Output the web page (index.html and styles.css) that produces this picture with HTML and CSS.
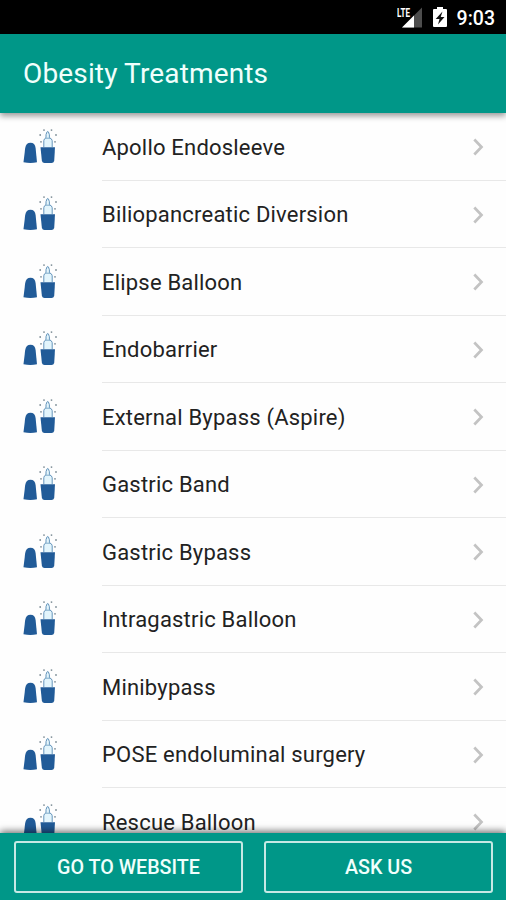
FILE: index.html
```html
<!DOCTYPE html>
<html lang="en">
<head>
<meta charset="utf-8">
<title>Obesity Treatments</title>
<link rel="stylesheet" href="styles.css">
</head>
<body>
<svg class="defs" aria-hidden="true">
  <symbol id="treatment" viewBox="0 0 36 36">
    <path d="M.5 33.3 2.2 19Q3 13.8 7.5 13.8T12.6 19L14 33.3Q7.5 34.6.5 33.3Z" fill="#215b98"/>
    <path d="M20.8 18V11.7Q21 9.7 23 8.7V5.7L24 2.9Q24.7 2.1 25.4 2.9L26.4 5.7V8.7Q29 9.7 29.2 11.7V18" fill="#e3f5fc" stroke="#6595bc" stroke-width="1"/>
    <path d="M22.5 9.2H27.2" stroke="#6595bc" stroke-width=".8"/>
    <path d="M17.5 18.2H32L31.2 32Q30.7 34 28.5 34H21.5Q19.4 34 18.9 32Z" fill="#215b98"/>
    <g fill="#7f8f98"><circle cx="21" cy="1.1" r=".9"/><circle cx="28.5" cy="1.1" r=".9"/><circle cx="17.2" cy="6" r=".9"/><circle cx="33" cy="6" r=".9"/><circle cx="18" cy="12.8" r=".9"/><circle cx="32" cy="12.8" r=".9"/></g>
  </symbol>
  <symbol id="chevron" viewBox="0 0 14 20"><path d="M2.3 2.5 9.5 10 2.3 17.5" fill="none" stroke="#c3c3c3" stroke-width="2.7"/></symbol>
</svg>
<div class="status">
  <svg class="signal" viewBox="0 0 28 24">
    <path d="M5 22.5 25 2.5V22.5Z" fill="#4d4d4d"/><path d="M5 22.5 17 10.5V22.5Z" fill="#fff"/>
    <text class="lte" x="0" y="11.5" textLength="13" lengthAdjust="spacingAndGlyphs">LTE</text>
  </svg>
  <svg class="battery" viewBox="0 0 14 20"><path d="M4 0H10V2H13Q14 2 14 3V19Q14 20 13 20H1Q0 20 0 19V3Q0 2 1 2H4Z" fill="#fff"/><path d="M9.5 4.5 2.7 12H6.5L5 17.5 11.5 10H7.7Z" fill="#111"/></svg>
  <span class="time">9:03</span>
</div>
<header class="header"><h1 class="title">Obesity Treatments</h1></header>
<main class="list">
  <div class="row"><svg class="icon"><use href="#treatment"/></svg><div class="item"><span>Apollo Endosleeve</span><svg class="chev"><use href="#chevron"/></svg></div></div>
  <div class="row"><svg class="icon"><use href="#treatment"/></svg><div class="item"><span>Biliopancreatic Diversion</span><svg class="chev"><use href="#chevron"/></svg></div></div>
  <div class="row"><svg class="icon"><use href="#treatment"/></svg><div class="item"><span>Elipse Balloon</span><svg class="chev"><use href="#chevron"/></svg></div></div>
  <div class="row"><svg class="icon"><use href="#treatment"/></svg><div class="item"><span>Endobarrier</span><svg class="chev"><use href="#chevron"/></svg></div></div>
  <div class="row"><svg class="icon"><use href="#treatment"/></svg><div class="item"><span>External Bypass (Aspire)</span><svg class="chev"><use href="#chevron"/></svg></div></div>
  <div class="row"><svg class="icon"><use href="#treatment"/></svg><div class="item"><span>Gastric Band</span><svg class="chev"><use href="#chevron"/></svg></div></div>
  <div class="row"><svg class="icon"><use href="#treatment"/></svg><div class="item"><span>Gastric Bypass</span><svg class="chev"><use href="#chevron"/></svg></div></div>
  <div class="row"><svg class="icon"><use href="#treatment"/></svg><div class="item"><span>Intragastric Balloon</span><svg class="chev"><use href="#chevron"/></svg></div></div>
  <div class="row"><svg class="icon"><use href="#treatment"/></svg><div class="item"><span>Minibypass</span><svg class="chev"><use href="#chevron"/></svg></div></div>
  <div class="row"><svg class="icon"><use href="#treatment"/></svg><div class="item"><span>POSE endoluminal surgery</span><svg class="chev"><use href="#chevron"/></svg></div></div>
  <div class="row"><svg class="icon"><use href="#treatment"/></svg><div class="item"><span>Rescue Balloon</span><svg class="chev"><use href="#chevron"/></svg></div></div>
</main>
<footer class="footer"><button class="btn">GO TO WEBSITE</button><button class="btn">ASK US</button></footer>
</body>
</html>
```
FILE: styles.css
```css
* { box-sizing: border-box; }
body {
  margin: 0;
  height: 900px;
  display: flex;
  flex-direction: column;
  overflow: hidden;
  background: #fefefe;
  font-family: Roboto, sans-serif;
}
.defs { position: absolute; width: 0; height: 0; }
.status {
  height: 34px;
  flex: none;
  display: flex;
  align-items: center;
  justify-content: flex-end;
  padding: 2px 11px 0 0;
  background: #000;
  color: #fff;
}
.signal { width: 28px; height: 24px; margin: -2px 8px 0 0; }
.lte { font-size: 12.5px; font-weight: 700; fill: #fff; stroke: #000; stroke-width: 1px; paint-order: stroke; }
.battery { width: 14px; height: 20px; margin: -2px 10px 0 0; }
.time { font-size: 19.5px; font-weight: 500; line-height: 24px; padding-top: 1px; }
.header {
  height: 79px;
  flex: none;
  display: flex;
  align-items: center;
  padding-left: 23px;
  background: #009788;
  box-shadow: 0 3px 6px rgba(0, 0, 0, .4);
  z-index: 1;
}
.title { margin: 0; font-size: 28px; font-weight: 400; letter-spacing: .15px; color: #f0fffc; }
.list { flex: 1; min-height: 0; overflow: hidden; }
.row { height: 67.5px; display: flex; align-items: center; padding-left: 23px; }
.icon { width: 36px; height: 36px; flex: none; margin-right: 43px; }
.item {
  flex: 1;
  height: 67.5px;
  display: flex;
  align-items: center;
  justify-content: space-between;
  padding-right: 20px;
  padding-top: 2px;
  border-bottom: 1px solid #e8e8e8;
  color: #222;
  font-size: 22px;
  letter-spacing: .2px;
}
.chev { width: 14px; height: 20px; }
.footer {
  height: 67px;
  flex: none;
  display: grid;
  grid-template-columns: 1fr 1fr;
  gap: 21px;
  padding: 8px 13px 7px 14px;
  background: #009788;
  box-shadow: 0 -2px 7px rgba(0, 0, 0, .55);
  z-index: 1;
}
.btn {
  border: 2px solid #c6e9e4;
  border-radius: 3px;
  background: none;
  color: #f0fffc;
  font: 500 19.7px Roboto, sans-serif;
  padding: 0;
}
```
